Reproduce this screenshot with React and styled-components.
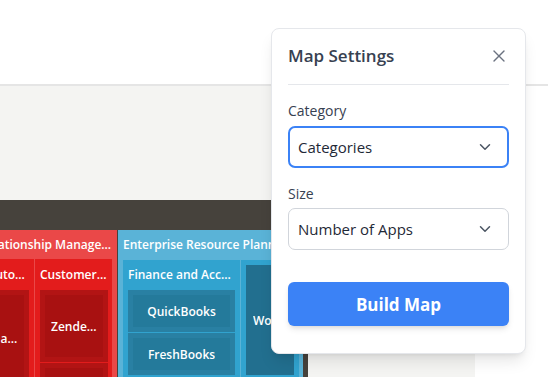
import React from 'react';
import styled, { createGlobalStyle } from 'styled-components';
import { X, ChevronDown } from 'lucide-react';

const GlobalStyle = createGlobalStyle`
  html, body {
    margin: 0;
    padding: 0;
    background: #ffffff;
    font-family: "Open Sans", "Noto Sans", Arial, sans-serif;
    overflow: hidden;
  }
`;

const Page = styled.div`
  width: 548px;
  height: 377px;
  position: relative;
  overflow: hidden;
`;

const TopBar = styled.div`
  height: 84px;
  background: #ffffff;
  border-bottom: 2px solid #e5e5e5;
`;

const Body = styled.div`
  display: flex;
  height: 291px;
`;

const Canvas = styled.div`
  width: 475px;
  background: #f4f4f2;
  padding-top: 114px;
  overflow: hidden;
`;

const Aside = styled.div`
  flex: 1;
  background: #ffffff;
`;

/* treemap */
const Treemap = styled.div`
  margin-left: -90px;
  width: 398px;
  height: 200px;
  background: #46423c;
  padding: 30px 5px 0;
  box-sizing: border-box;
  display: flex;
  gap: 1px;
`;

const Group = styled.div`
  width: ${p => p.$w}px;
  display: flex;
  flex-direction: column;
  background: ${p => p.$head};
`;

const Label = styled.div`
  height: ${p => p.$h || 30}px;
  line-height: ${p => p.$h || 30}px;
  padding: 0 5px;
  color: #ffffff;
  font-size: 12px;
  font-weight: 600;
  white-space: nowrap;
  overflow: hidden;
  text-overflow: ellipsis;
  flex-shrink: 0;
`;

const GroupBody = styled.div`
  flex: 1;
  margin: 0 5px;
  display: flex;
  gap: 1px;
  background: ${p => p.$line};
`;

const Sub = styled.div`
  width: ${p => p.$w}px;
  background: ${p => p.$bg};
  display: flex;
  flex-direction: column;
`;

const Leaves = styled.div`
  flex: 1;
  display: flex;
  flex-direction: column;
  gap: 1px;
  padding: ${p => p.$pad || '0 5px'};
  background: ${p => p.$bg};
`;

const Leaf = styled.div`
  height: ${p => p.$h}px;
  flex-shrink: 0;
  padding: 5px;
  box-sizing: border-box;
  background: ${p => p.$outer};
  display: flex;
`;

const LeafInner = styled.div`
  flex: 1;
  min-width: 0;
  background: ${p => p.$inner};
  display: flex;
  align-items: center;
  justify-content: center;
  padding: 0 ${p => p.$pad ?? 6}px;
  color: #ffffff;
  font-size: 12px;
  font-weight: 600;
`;

const LeafText = styled.span`
  white-space: nowrap;
  overflow: hidden;
  text-overflow: ellipsis;
`;

/* settings panel */
const Panel = styled.div`
  position: absolute;
  left: 271px;
  top: 28px;
  width: 255px;
  box-sizing: border-box;
  background: #ffffff;
  border: 1px solid #e5e7eb;
  border-radius: 8px;
  box-shadow: 0 10px 15px -3px rgba(0, 0, 0, 0.1), 0 4px 6px -4px rgba(0, 0, 0, 0.1);
  padding: 15px 16px 27px;
`;

const PanelHead = styled.div`
  display: flex;
  align-items: center;
  justify-content: space-between;
  height: 24px;
  padding-bottom: 16px;
  border-bottom: 1px solid #e5e7eb;
`;

const Title = styled.h2`
  margin: 0;
  font-size: 17px;
  line-height: 24px;
  font-weight: 600;
  color: #374151;
`;

const CloseButton = styled.button`
  border: 0;
  background: none;
  padding: 0;
  display: flex;
  color: #6b7280;
  cursor: pointer;
`;

const Field = styled.div`
  margin-top: ${p => p.$mt}px;
`;

const FieldLabel = styled.div`
  font-size: 14px;
  line-height: 20px;
  color: #374151;
  margin-bottom: ${p => p.$mb}px;
`;

const Select = styled.div`
  height: 42px;
  box-sizing: border-box;
  border: ${p => (p.$focus ? '2px solid #3b82f6' : '1px solid #d1d5db')};
  border-radius: 7px;
  display: flex;
  align-items: center;
  justify-content: space-between;
  padding: 0 ${p => (p.$focus ? 13 : 14)}px 0 ${p => (p.$focus ? 8 : 9)}px;
  font-size: 15px;
  color: #1f2937;
`;

const BuildButton = styled.button`
  margin-top: 32px;
  width: 100%;
  height: 44px;
  border: 0;
  border-radius: 6px;
  background: #3b82f6;
  color: #ffffff;
  font-family: inherit;
  font-size: 17px;
  font-weight: 700;
  box-shadow: 0 4px 6px -1px rgba(0, 0, 0, 0.1), 0 2px 4px -2px rgba(0, 0, 0, 0.1);
  cursor: pointer;
`;

const RED = { head: '#ea4848', body: '#e31c1c', outer: '#b21414', inner: '#a81111' };
const BLUE = { head: '#5ab3d7', body: '#31a3cf', outer: '#2980a3', inner: '#247a9b', deep: '#226f8f' };

export default function App() {
  return (
    <Page>
      <GlobalStyle />
      <TopBar />
      <Body>
        <Canvas>
          <Treemap>
            <Group $w={202} $head={RED.head}>
              <Label $h={29}>Customer Relationship Management</Label>
              <GroupBody $line={RED.head}>
                <Sub $w={114} $bg={RED.body}>
                  <Label $h={31}>Marketing Automation</Label>
                  <Leaves $bg={RED.body}>
                    <Leaf $h={96} $outer={RED.outer}>
                      <LeafInner $inner={RED.inner}><LeafText>HubSpot Marketing</LeafText></LeafInner>
                    </Leaf>
                  </Leaves>
                </Sub>
                <Sub $w={77} $bg={RED.body}>
                  <Label $h={31}>Customer Service</Label>
                  <Leaves $bg={RED.body} $pad="0 4px 0 5px">
                    <Leaf $h={72} $outer={RED.outer}>
                      <LeafInner $inner={RED.inner}><LeafText>Zendesk</LeafText></LeafInner>
                    </Leaf>
                    <Leaf $h={60} $outer={RED.outer}>
                      <LeafInner $inner={RED.inner}><LeafText>Freshdesk</LeafText></LeafInner>
                    </Leaf>
                  </Leaves>
                </Sub>
              </GroupBody>
            </Group>
            <Group $w={185} $head={BLUE.head}>
              <Label>Enterprise Resource Planning</Label>
              <GroupBody $line={BLUE.head}>
                <Sub $w={117} $bg={BLUE.body}>
                  <Label>Finance and Accounting</Label>
                  <Leaves $bg={BLUE.body}>
                    <Leaf $h={42} $outer={BLUE.outer}>
                      <LeafInner $inner={BLUE.inner}><LeafText>QuickBooks</LeafText></LeafInner>
                    </Leaf>
                    <Leaf $h={42} $outer={BLUE.outer}>
                      <LeafInner $inner={BLUE.inner}><LeafText>FreshBooks</LeafText></LeafInner>
                    </Leaf>
                  </Leaves>
                </Sub>
                <Sub $w={58} $bg={BLUE.body}>
                  <Leaves $bg={BLUE.body} $pad="5px 5px 0">
                    <Leaf $h={110} $outer={BLUE.deep}>
                      <LeafInner $inner={BLUE.deep} $pad={2}><LeafText>Workday</LeafText></LeafInner>
                    </Leaf>
                  </Leaves>
                </Sub>
              </GroupBody>
            </Group>
          </Treemap>
        </Canvas>
        <Aside />
      </Body>

      <Panel>
        <PanelHead>
          <Title>Map Settings</Title>
          <CloseButton aria-label="Close">
            <X size={20} strokeWidth={1.6} />
          </CloseButton>
        </PanelHead>
        <Field $mt={16}>
          <FieldLabel $mb={5}>Category</FieldLabel>
          <Select $focus>
            <span>Categories</span>
            <ChevronDown size={18} color="#4b5563" strokeWidth={2} />
          </Select>
        </Field>
        <Field $mt={16}>
          <FieldLabel $mb={4}>Size</FieldLabel>
          <Select>
            <span>Number of Apps</span>
            <ChevronDown size={18} color="#4b5563" strokeWidth={2} />
          </Select>
        </Field>
        <BuildButton>Build Map</BuildButton>
      </Panel>
    </Page>
  );
}
